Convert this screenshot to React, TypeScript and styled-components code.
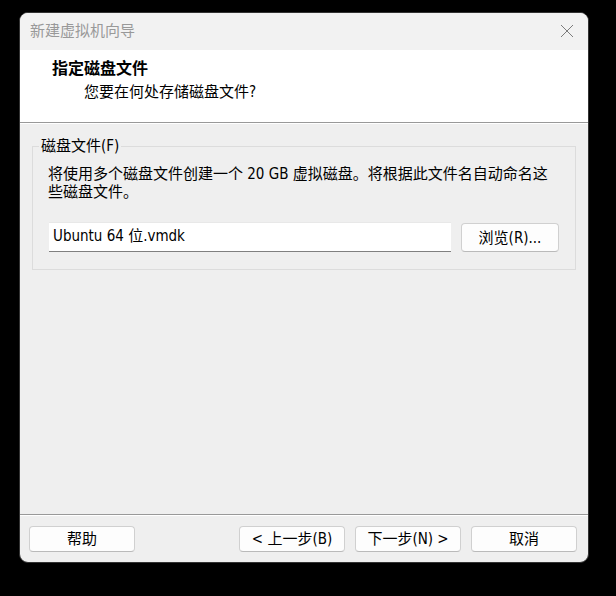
import React, { useState } from "react";
import styled, { createGlobalStyle } from "styled-components";

const GlobalStyle = createGlobalStyle`
  *, *::before, *::after { box-sizing: border-box; }
  body {
    margin: 0;
    background: #000;
    color: #000;
    font: 15px/18px "DejaVu Sans Condensed", "Noto Sans CJK SC", sans-serif;
  }
  button, input { font: inherit; color: inherit; }
`;

const Desktop = styled.div`
  display: flex;
  min-height: 100vh;
  padding: 12px 27px 33px 19px;
`;

const Dialog = styled.main`
  flex: 1;
  min-width: 0;
  display: flex;
  flex-direction: column;
  overflow: hidden;
  background: #efefef;
  border: 1px solid #333;
  border-radius: 9px;
`;

const TitleBar = styled.header`
  display: flex;
  align-items: center;
  justify-content: space-between;
  height: 37px;
  padding: 0 14px 2px 10px;
  background: #f2f2f2;
  color: #999;
`;

const CloseButton = styled.button`
  display: flex;
  padding: 0;
  border: 0;
  background: none;
  color: #7c7c7c;
`;

const Heading = styled.section`
  height: 74px;
  padding: 9px 32px;
  background: #fff;
  border-bottom: 1px solid #fff;
  box-shadow: inset 0 -1px #999;
`;

const Title = styled.h1`
  margin: 0;
  font-size: 16px;
  line-height: 20px;
`;

const Subtitle = styled.p`
  margin: 4px 0 0 32px;
`;

const Body = styled.form`
  flex: 1;
  padding: 14px 12px;
`;

const Group = styled.fieldset`
  min-width: 0;
  margin: 0;
  padding: 10px 16px 17px 15px;
  border: 1px solid #dcdcdc;
`;

const Legend = styled.legend`
  margin-left: -9px;
  padding: 0 2px;
  line-height: 17px;
`;

const Description = styled.p`
  margin: 0 0 21px;
`;

const FileRow = styled.div`
  display: flex;
  align-items: flex-end;
  gap: 10px;
`;

const FileInput = styled.input`
  flex: 1;
  min-width: 0;
  height: 30px;
  margin-left: 1px;
  padding: 0 4px 6px;
  background: #fff;
  border: 0;
  border-top: 1px solid #e8e8e8;
  border-bottom: 1px solid #808080;
  border-radius: 0;
  outline: none;
`;

const Button = styled.button<{ $compact?: boolean }>`
  width: ${({ $compact }) => ($compact ? "98px" : "106px")};
  height: ${({ $compact }) => ($compact ? "29px" : "26px")};
  padding: 0;
  flex: none;
  white-space: nowrap;
  background: #fdfdfd;
  border: 1px solid #d0d0d0;
  border-bottom-color: #bababa;
  border-radius: 4px;
`;

const Footer = styled.footer`
  display: flex;
  align-items: flex-start;
  justify-content: space-between;
  padding: 11px 11px 10px 9px;
  border-top: 1px solid #999;
  box-shadow: inset 0 1px #fff;
`;

const Actions = styled.div`
  display: flex;
  gap: 10px;
`;

export default function App() {
  const [file, setFile] = useState("Ubuntu 64 位.vmdk");
  return (
    <>
      <GlobalStyle />
      <Desktop>
        <Dialog>
          <TitleBar>
            <span>新建虚拟机向导</span>
            <CloseButton type="button" aria-label="关闭">
              <svg width="14" height="14" viewBox="0 0 14 14" fill="none" stroke="currentColor">
                <path d="M1 1 13 13M13 1 1 13" />
              </svg>
            </CloseButton>
          </TitleBar>
          <Heading>
            <Title>指定磁盘文件</Title>
            <Subtitle>您要在何处存储磁盘文件?</Subtitle>
          </Heading>
          <Body onSubmit={(e) => e.preventDefault()}>
            <Group>
              <Legend>
                <label htmlFor="disk-file">磁盘文件(F)</label>
              </Legend>
              <Description>
                将使用多个磁盘文件创建一个 20 GB 虚拟磁盘。将根据此文件名自动命名这些磁盘文件。
              </Description>
              <FileRow>
                <FileInput
                  id="disk-file"
                  type="text"
                  value={file}
                  onChange={(e) => setFile(e.target.value)}
                />
                <Button type="button" $compact>浏览(R)...</Button>
              </FileRow>
            </Group>
          </Body>
          <Footer>
            <Button type="button">帮助</Button>
            <Actions>
              <Button type="button">&lt; 上一步(B)</Button>
              <Button type="button">下一步(N) &gt;</Button>
              <Button type="button">取消</Button>
            </Actions>
          </Footer>
        </Dialog>
      </Desktop>
    </>
  );
}
